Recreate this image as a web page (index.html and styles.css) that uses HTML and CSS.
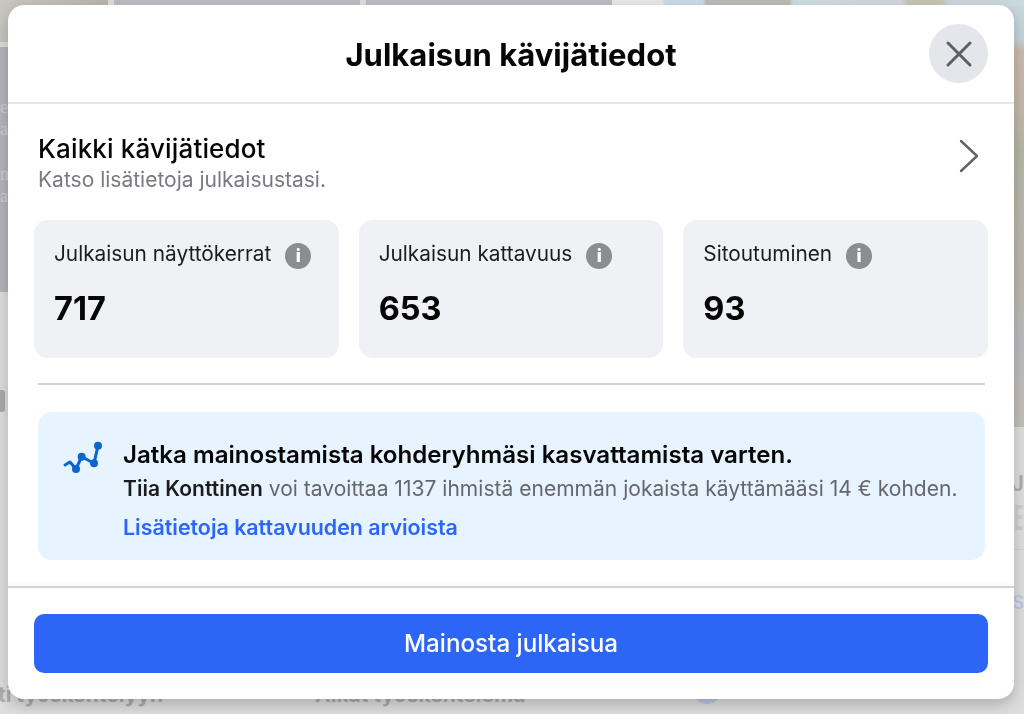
FILE: index.html
```html
<!DOCTYPE html>
<html lang="en">
<head>
    <meta charset="UTF-8">
    <meta name="viewport" content="width=device-width, initial-scale=1.0">
    <title>Julkaisun kävijätiedot</title>
    <link rel="stylesheet" href="styles.css">
</head>
<body>

    <div class="page">
        <div class="page-top">
            <div class="tile-col">
                <div class="tile-photo"></div>
                <div class="tile-gray">
                    <p>en</p>
                    <p>a</p>
                    <p class="gap">nt</p>
                    <p>ar</p>
                </div>
                <div class="left-mark"></div>
            </div>
            <div class="tile-wide"></div>
            <div class="tile-wide"></div>
            <div class="tile-right"><div class="tile-strip"></div></div>
        </div>
        <div class="page-bottom">
            <div class="page-side">
                <span class="mark-j">J</span>
                <span class="mark-e">E</span>
                <span class="mark-line"></span>
                <span class="mark-s">S</span>
            </div>
            <div class="page-labels">
                <span>ti työskentelyyn</span>
                <span>Aikat työskentelemä</span>
                <span class="avatar"></span>
            </div>
        </div>
    </div>

    <div class="overlay">
        <section class="modal">
            <header class="modal-head">
                <h1>Julkaisun kävijätiedot</h1>
                <button class="close" aria-label="Sulje">
                    <svg width="28" height="28" viewBox="0 0 28 28"><path d="M3 3 L25 25 M25 3 L3 25"/></svg>
                </button>
            </header>

            <div class="modal-body">
                <div class="all-stats">
                    <div>
                        <h2>Kaikki kävijätiedot</h2>
                        <p>Katso lisätietoja julkaisustasi.</p>
                    </div>
                    <svg class="chevron" width="20" height="34" viewBox="0 0 20 34"><path d="M2 2 L18 17 L2 32"/></svg>
                </div>

                <div class="cards">
                    <div class="card">
                        <div class="card-label">Julkaisun näyttökerrat <span class="info">i</span></div>
                        <div class="card-num">717</div>
                    </div>
                    <div class="card">
                        <div class="card-label">Julkaisun kattavuus <span class="info">i</span></div>
                        <div class="card-num">653</div>
                    </div>
                    <div class="card">
                        <div class="card-label">Sitoutuminen <span class="info">i</span></div>
                        <div class="card-num">93</div>
                    </div>
                </div>

                <hr class="rule">

                <div class="promo">
                    <svg class="promo-icon" width="42" height="36" viewBox="0 0 42 36">
                        <path d="M3 25 L8 22 L14 29 L19.7 16.7 L32 23.3 L36 5.7"/>
                        <circle cx="14" cy="29" r="4"/>
                        <circle cx="19.7" cy="16.7" r="4"/>
                        <circle cx="32" cy="23.3" r="4"/>
                        <circle cx="36" cy="5.7" r="4"/>
                    </svg>
                    <div class="promo-text">
                        <h3>Jatka mainostamista kohderyhmäsi kasvattamista varten.</h3>
                        <p><b>Tiia Konttinen</b> voi tavoittaa 1137 ihmistä enemmän jokaista käyttämääsi 14 € kohden.</p>
                        <a href="#">Lisätietoja kattavuuden arvioista</a>
                    </div>
                </div>
            </div>

            <footer class="modal-foot">
                <button class="boost">Mainosta julkaisua</button>
            </footer>
        </section>
    </div>

</body>
</html>
```

FILE: styles.css
```css
html, body { margin: 0; padding: 0; height: 100%; overflow: hidden; }
body { font-family: Inter, "Liberation Sans", sans-serif; background: #dedede; color: #050505; }
h1, h2, h3, p { margin: 0; }

/* dimmed page behind the dialog */
.page { height: 714px; display: flex; flex-direction: column; }
.page-top { height: 427px; display: flex; align-items: flex-start; gap: 6px; }
.tile-col { width: 108px; margin-right: -6px; padding-right: 6px; }
.tile-photo { height: 42px; background: linear-gradient(100deg, #c9c7c1, #b9b5ac); margin-bottom: 5px; }
.tile-gray { height: 245px; box-sizing: border-box; width: 108px; background: #b3b5ba; color: #cfd0d3; font-family: "Liberation Serif", serif; font-size: 18px; line-height: 22px; overflow: hidden; padding-top: 49px; }
.tile-gray .gap { margin-top: 23px; }
.left-mark { width: 5px; height: 22px; margin-top: 98px; background: #ababab; border-radius: 0 3px 3px 0; }
.tile-wide { width: 246px; height: 292px; background: #bcbdc3; }
.tile-right { flex: 1; height: 427px; margin-left: -6px; background: linear-gradient(180deg, #c9d6de 0, #c7d3da 40px, #c8bcae 50px, #c4b9ab 110px, #b5b8a8 150px, #bdb9b0 290px, #bcbcc0 345px, #c3bfb8 427px); }
.tile-strip { height: 6px; background: linear-gradient(90deg, #e8e8e8 0, #e8e8e8 12%, #ccdbe4 13%, #ccdbe4 22%, #bdbbb6 23%, #bdbbb6 43%, #cfdce4 44%, #d3d8df 70%, #c7c4b8 72%, #c7c4b8 80%, #ccd8df 82%); }

.page-bottom { flex: 1; display: flex; flex-direction: column; }
.page-side { display: flex; flex-direction: column; align-items: flex-end; padding-top: 46px; }
.page-side span { font-weight: 600; }
.mark-j { font-size: 22px; line-height: 20px; color: #adadad; }
.mark-e { font-size: 34px; line-height: 30px; margin-top: 10px; color: #cdcdcd; font-weight: 400; transform: scaleX(.45); transform-origin: right; }
.mark-line { width: 10px; height: 1px; margin-top: 16px; background: #d3d3d3; }
.mark-s { font-size: 18px; line-height: 20px; margin-top: 43px; color: #bcc8e6; }
.page-labels { display: flex; align-items: center; gap: 152px; margin: auto 0 8px -2px; height: 22px; font-size: 21px; font-weight: 700; line-height: 22px; color: #adadad; }
.avatar { width: 28px; height: 28px; margin: -10px 0 0 16px; border-radius: 50%; background: #bcc8e6; flex: none; }

/* dialog */
.overlay { position: fixed; inset: 0; padding: 5px 10px 15px 8px; display: flex; }
.modal { flex: 1; display: flex; flex-direction: column; background: #fff; border-radius: 16px; box-shadow: 0 6px 16px rgba(0, 0, 0, 0.22); overflow: hidden; }

.modal-head { height: 99px; box-sizing: border-box; padding-top: 2px; flex: none; display: flex; align-items: center; justify-content: center; border-bottom: 2px solid #e4e6e9; position: relative; }
.modal-head h1 { font-size: 31px; font-weight: 700; letter-spacing: 0.03px; }
.close { position: absolute; right: 26px; top: 19px; width: 59px; height: 59px; border: none; border-radius: 50%; background: #e4e6eb; padding: 0; display: flex; align-items: center; justify-content: center; }
.close path { stroke: #5b6068; stroke-width: 3; stroke-linecap: round; fill: none; }

.modal-body { flex: 1; padding: 0 26px; }
.all-stats { display: flex; justify-content: space-between; align-items: flex-start; padding: 28px 9px 0 4px; }
.all-stats h2 { font-size: 26px; line-height: 34px; font-weight: 500; letter-spacing: 0.15px; }
.all-stats p { font-size: 21px; line-height: 28px; color: #777a80; }
.chevron { margin-top: 7px; }
.chevron path { stroke: #5f646c; stroke-width: 2.4; stroke-linecap: round; stroke-linejoin: round; fill: none; }

.cards { display: grid; grid-template-columns: repeat(3, 1fr); gap: 20px; margin-top: 26px; }
.card { height: 138px; box-sizing: border-box; background: #f0f1f5; border-radius: 14px; padding: 19px 20px; }
.card-label { display: flex; align-items: center; gap: 14px; font-size: 20.8px; line-height: 30px; color: #1c1c1c; }
.info { width: 26px; height: 26px; margin-top: 4px; border-radius: 50%; background: #8a8d91; color: #fff; font-size: 18px; font-weight: 800; text-align: center; line-height: 26px; }
.card-num { font-size: 32.5px; font-weight: 700; line-height: 40px; margin-top: 20px; }

.rule { border: none; height: 2px; background: #cfcfcf; margin: 25px 3px 0 4px; }

.promo { display: flex; margin: 27px 3px 0 4px; height: 148px; background: #e7f3ff; border-radius: 14px; padding: 28px 24px 0 24px; box-sizing: border-box; }
.promo-icon { flex: none; margin-right: 19px; }
.promo-icon path { stroke: #0a66cc; stroke-width: 3; fill: none; stroke-linejoin: round; stroke-linecap: round; }
.promo-icon circle { fill: #0a66cc; }
.promo-text h3 { font-size: 24.1px; line-height: 30px; font-weight: 600; }
.promo-text p { margin-top: 3px; font-size: 21px; line-height: 32px; color: #65676b; white-space: nowrap; letter-spacing: 0.02px; }
.promo-text p b { font-weight: 600; color: #1c1c1c; }
.promo-text a { display: block; margin-top: 7px; font-size: 21.4px; line-height: 30px; font-weight: 600; color: #2d66f6; text-decoration: none; }

.modal-foot { flex: none; height: 113px; box-sizing: border-box; border-top: 2px solid #d2d3d6; box-shadow: 0 -3px 5px rgba(0, 0, 0, 0.03); padding: 26px 26px 0; }
.boost { width: 100%; height: 59px; border: none; border-radius: 10px; background: #2d66f6; color: #fff; font-family: inherit; font-size: 24.2px; font-weight: 500; }
```
